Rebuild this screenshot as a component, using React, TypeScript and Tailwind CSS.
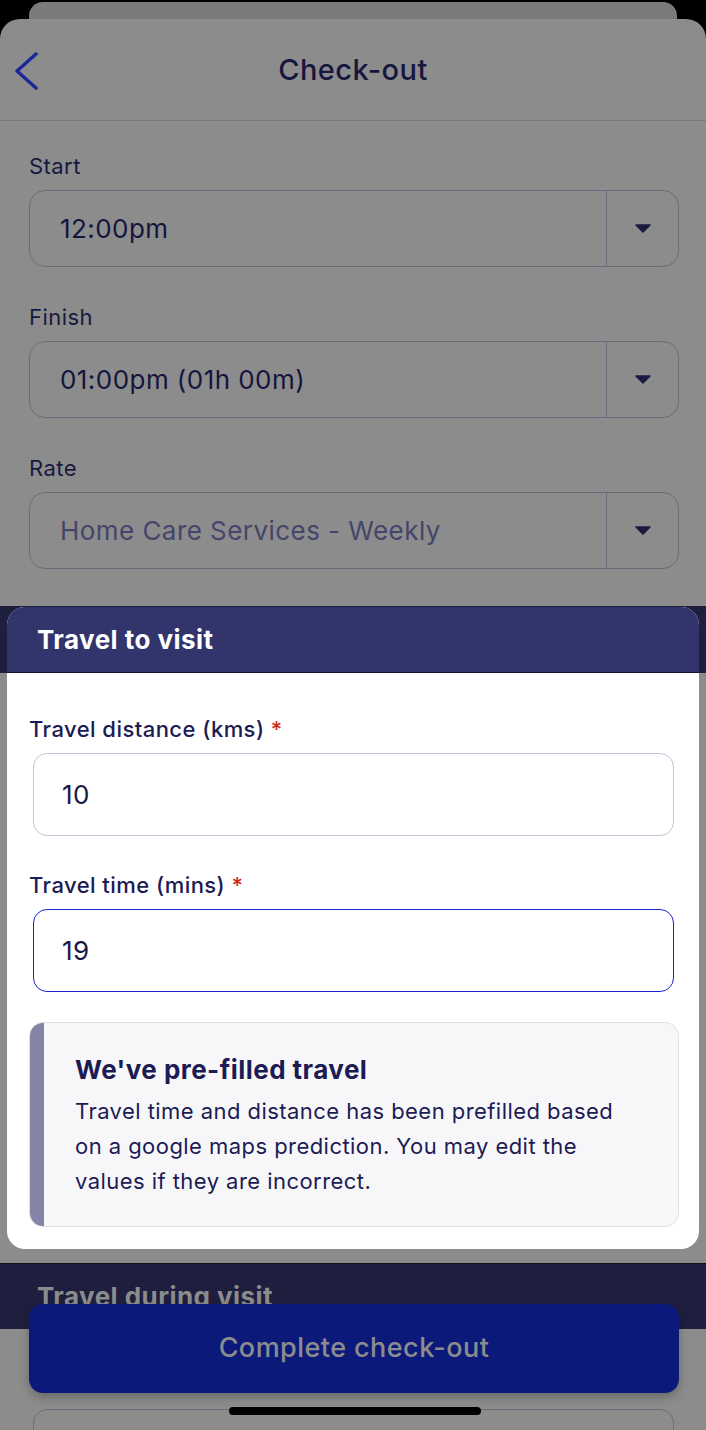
const SelectField = ({ label, value, muted }: { label: string; value: string; muted?: boolean }) => (
  <div>
    <p className="text-[22px] leading-[28px] text-[#181940]">{label}</p>
    <div className="mt-[10px] flex h-[77px] rounded-[16px] border border-[#6b6b7c]">
      <div
        className={`flex flex-1 items-center pl-[30px] text-[26px] ${
          muted ? "text-[#44456a]" : "text-[#14153e]"
        }`}
      >
        {value}
      </div>
      <div className="flex w-[72px] items-center justify-center border-l border-[#6b6b7c]">
        <svg width="16" height="9" viewBox="0 0 16 9">
          <path d="M1 1h14l-7 7z" fill="#1b1b40" stroke="#1b1b40" strokeLinejoin="round" strokeWidth="1.5" />
        </svg>
      </div>
    </div>
  </div>
);

const TextField = ({ label, value, focused }: { label: string; value: string; focused?: boolean }) => (
  <div>
    <p className="text-[22px] font-medium leading-[28px] text-[#1c1b54]">
      {label} <span className="text-[#cc2a14]">*</span>
    </p>
    <div
      className={`ml-[4px] mr-[5px] mt-[10px] flex h-[83px] items-center rounded-[14px] bg-white pl-[28px] text-[26px] text-[#171746] ${
        focused ? "border-[1.5px] border-[#1a22cf]" : "border-[1.5px] border-[#c3c3d6]"
      }`}
    >
      {value}
    </div>
  </div>
);

export default function App() {
  return (
    <div className="relative h-[1430px] overflow-hidden bg-black font-['Inter','Liberation_Sans',sans-serif] tracking-[0.028em]">
      <div className="mx-[29px] mt-[2px] h-[40px] rounded-t-[14px] bg-[#7b7b7b]" />
      <div className="relative -mt-[23px] rounded-t-[20px] bg-[#8c8c8c]">
        <header className="relative flex h-[102px] items-center justify-center border-b border-[#777]">
          <svg
            className="absolute left-[14px] top-[33px]"
            width="26"
            height="38"
            viewBox="0 0 26 38"
            fill="none"
            stroke="#1a289c"
            strokeWidth="3.5"
            strokeLinecap="round"
            strokeLinejoin="round"
          >
            <path d="M22 2 3 19l19 17" />
          </svg>
          <h1 className="text-[29px] font-medium text-[#16173f]">Check-out</h1>
        </header>

        <div className="flex flex-col gap-[36px] pl-[29px] pr-[27px] pt-[31px]">
          <SelectField label="Start" value="12:00pm" />
          <SelectField label="Finish" value="01:00pm (01h 00m)" />
          <SelectField label="Rate" value="Home Care Services - Weekly" muted />
        </div>

        <section className="mt-[37px] bg-[linear-gradient(#1e1f3f_0_67px,#8c8c8c_67px)] pb-[14px] pt-[1px]">
          <div className="mx-[7px] overflow-hidden rounded-[18px] bg-white">
            <div className="flex h-[66px] items-center border-b border-[#15162e] bg-[#32346c] pl-[30px]">
              <h2 className="text-[26px] font-bold text-white">Travel to visit</h2>
            </div>
            <div className="pb-[22px] pl-[22px] pr-[20px] pt-[42px]">
              <TextField label="Travel distance (kms)" value="10" />
              <div className="mt-[35px]">
                <TextField label="Travel time (mins)" value="19" focused />
              </div>
              <div className="mt-[30px] flex overflow-hidden rounded-[14px] border border-[#dedee8] bg-[#f7f7fa]">
                <div className="w-[14px] shrink-0 bg-[#8384a6]" />
                <div className="pb-[27px] pl-[31px] pr-[20px] pt-[31px] text-[#1c1b54]">
                  <h3 className="text-[26px] font-bold leading-[32px]">We've pre-filled travel</h3>
                  <p className="mt-[8px] text-[22px] leading-[35px]">
                    Travel time and distance has been prefilled based
                    <br />
                    on a google maps prediction. You may edit the
                    <br />
                    values if they are incorrect.
                  </p>
                </div>
              </div>
            </div>
          </div>
        </section>

        <section className="border-t border-[#111]">
          <div className="flex h-[65px] items-center bg-[#1e1f3f] pl-[37px]">
            <h2 className="text-[26px] font-bold text-[#8c8c8c]">Travel during visit</h2>
          </div>
          <div className="pl-[29px] pr-[27px] pt-[37px]">
            <p className="text-[22px] font-medium leading-[28px] text-[#181940]">
              Travel distance (kms) <span className="text-[#701a10]">*</span>
            </p>
            <div className="ml-[4px] mr-[5px] mt-[15px] h-[83px] rounded-[14px] border-[1.5px] border-[#6b6b7c]" />
          </div>
        </section>
      </div>

      <button className="absolute bottom-[37px] left-[29px] right-[27px] flex h-[89px] items-center justify-center rounded-[14px] bg-[#0b1a7a] text-[27px] font-medium text-[#8c8c8e] shadow-[0_4px_10px_rgba(0,0,0,0.25)]">
        Complete check-out
      </button>
      <div className="absolute bottom-[15px] left-[229px] h-[8px] w-[252px] rounded-full bg-black" />
    </div>
  );
}
